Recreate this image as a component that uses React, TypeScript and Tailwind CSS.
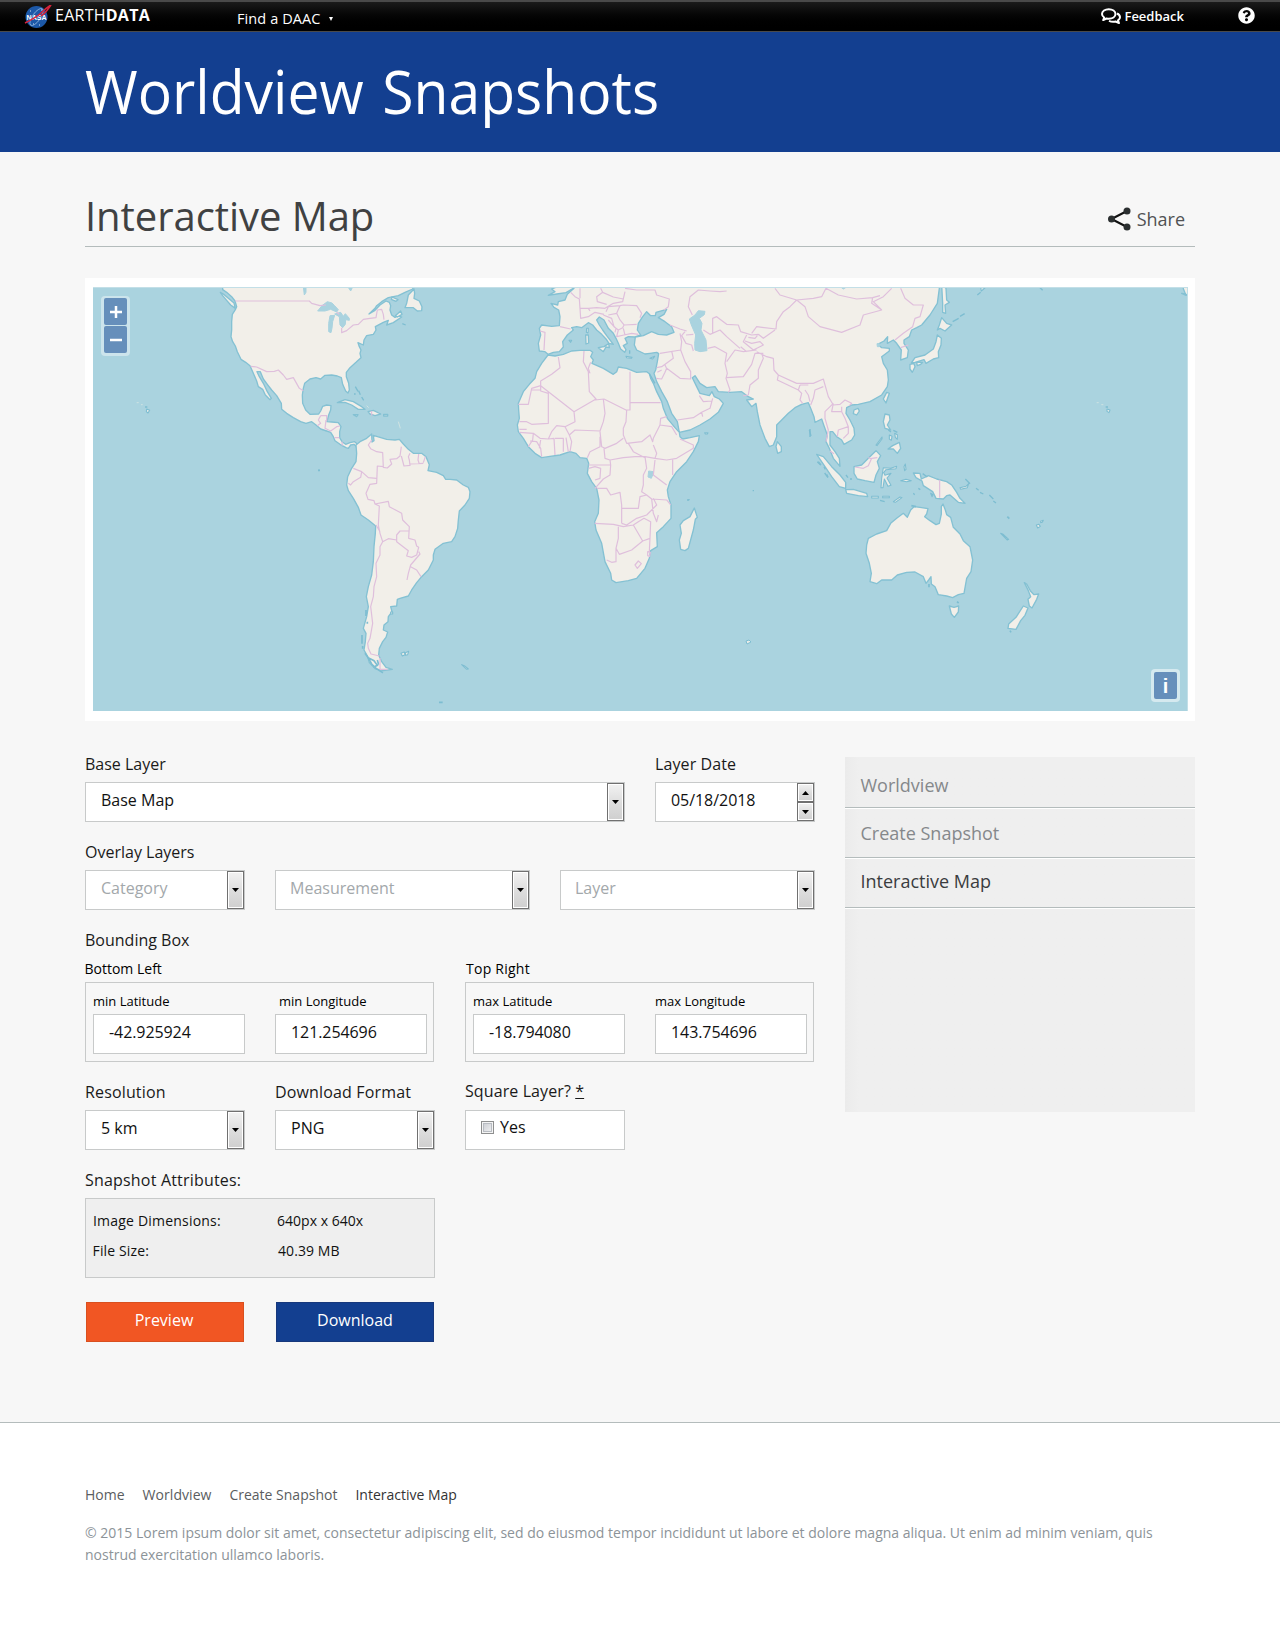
import React from "react";
import { FaQuestionCircle } from "react-icons/fa";

function Land({ d }: { d: string }) {
  return <path d={d} fill="#f2efe9" stroke="#84c1d3" strokeWidth="4" strokeLinejoin="round" />;
}

function Islet({ d }: { d: string }) {
  return <path d={d} fill="#e9ece8" stroke="#7dbdd1" strokeWidth="3.2" strokeLinejoin="round" />;
}

function Sea({ d }: { d: string }) {
  return <path d={d} fill="#aad3df" stroke="#aad3df" strokeWidth="3" strokeLinejoin="round" />;
}

function Border({ d }: { d: string }) {
  return <path d={d} fill="none" stroke="#dfbfdc" strokeWidth="3.6" strokeLinejoin="round" />;
}

function WorldMap() {
  return (
    <svg className="block h-[424px] w-[1095px] bg-[#aad3df]" viewBox="93 287 1095 424">
      {/* North America and the Caribbean */}
      <g transform="translate(80 275) scale(.33333)">
        <Land d="M428 20V44L440 52 455 65 465 78 470 95 466 104 457 118 455 140 455 165 453 185 458 200 466 213 472 230 483 253 497 262 510 272 518 290 530 318 535 335 548 343 556 360 570 374 574 370 562 350 550 325 538 305 531 290 541 290 550 312 562 328 575 345 590 362 604 385 605 403 620 415 640 428 662 440 678 445 695 440 708 450 722 462 740 468 752 472 760 485 765 497 780 508 798 518 805 520 812 510 822 508 828 514 832 522 835 510 824 500 810 503 797 508 786 500 779 488 779 470 783 455 775 443 755 441 741 440 746 420 752 405 753 392 740 390 728 394 722 408 716 417 690 418 677 405 668 385 667 360 670 340 674 325 690 312 708 308 722 312 735 301 755 300 772 303 784 308 788 328 797 348 804 354 808 345 806 325 799 305 799 292 810 278 828 262 843 248 840 235 843 225 838 215 834 203 850 210 852 195 860 182 880 178 888 165 886 155 910 142 925 136 920 150 940 143 965 126 955 122 945 127 935 120 930 105 932 92 928 82 918 78 900 90 885 106 867 117 885 100 890 92 905 80 925 68 955 62 975 52 998 42 1005 20Z" />
        <Land d="M421 52L430 57 445 70 462 84 466 100 452 90 440 76 428 62Z" />
        <Land d="M985 60L1002 42 1004 55 1002 70 1018 78 1026 95 1025 107 1012 108 1000 98 975 98 980 85Z" />
        <Land d="M936 66l18 8-6 5-14-6zM946 122l16-14 4 10-14 8z" />
        <Land d="M772 383L795 374 820 380 845 395 855 403 835 403 815 390 795 382Z" />
        <Land d="M864 410L880 406 902 417 885 422 870 417ZM820 419h14l-4 6zM911 418h12v5h-12z" />
        <path d="M826 335l8 14M836 347l5 12M845 366l6 10M822 357h5M195 396h7M967 146l10 4M714 586h6" stroke="#7dbdd1" strokeWidth="4" />
        <path d="M170 383h6M183 389h5M860 392l6 6M955 440l6 20" stroke="#cfe3e2" strokeWidth="3" />
        <Islet d="M200 402l9 4-5 8-5-4z" />
        <Sea d="M713 108L726 92 742 80 756 84 764 92 775 104 770 111 752 103 735 108ZM750 122L764 121 758 140 756 160 753 173 746 170 746 145ZM764 117L782 112 790 124 796 116 808 130 808 136 797 134 796 148 788 158 780 150 778 125ZM670 36L678 36 678 52 673 60ZM804 36h14l-6 12z" />
        <Border d="M466 78H688L695 85 720 92 738 90M770 112L778 118M785 158L785 173 800 167 820 150 835 148 850 133 870 130 888 128 892 105 905 103 910 118 912 134M512 274L530 276 560 290 583 289 595 285 610 300 620 313 640 308 658 340 670 347M722 422H740V438M722 422L715 435 722 445 712 452M738 435L735 460 752 468 770 455 780 453M763 488H778M786 500L787 512M874 408l2 14" />
      </g>

      {/* South America, Madagascar */}
      <g transform="translate(300 430) scale(.33333)">
        <Land d="M168 45L180 35 200 25 215 12 216 36 222 32 220 16 240 22 260 28 285 30 298 28 310 42 325 58 340 70 365 70 378 80 383 92 388 104 384 122 410 127 430 137 437 148 450 148 470 150 490 165 505 172 510 185 508 205 495 225 478 243 475 270 473 295 465 320 455 335 430 340 405 358 400 375 400 390 385 420 365 440 350 458 335 480 325 498 300 505 292 508 290 528 272 530 276 545 265 560 264 575 252 585 250 600 263 606 258 622 248 635 238 655 236 675 245 695 258 712 277 718 250 722 225 716 208 698 203 680 192 660 196 635 198 610 190 595 200 560 205 530 199 500 205 470 215 435 220 395 222 350 226 310 227 288 205 270 183 255 175 232 160 205 145 182 140 165 143 140 155 115 168 95 170 70Z" />
        <Land d="M1183 234L1192 262 1186 268 1180 300 1165 355 1155 362 1142 358 1138 330 1144 310 1140 285 1150 272 1170 260Z" />
        <Islet d="M303 670l10-4 2 8-8 4zM316 668l10-4-3 10-6 2zM485 704l8 3 12 10-5 1zM272 546h6v6h-6z" />
        <path d="M198 540v18M202 575v6M186 615v26M188 648v8M195 670l10 14 10 18 14 14 20 12M206 684l16 8 10 14-12 6M232 690l4 14M417 817h11M54 121h6M1161 210h6" fill="none" stroke="#7dbdd1" strokeWidth="5" />
        <Border d="M215 30L205 45 212 56 230 65 248 68 250 112 262 114 275 102 270 88 290 86 300 78 304 50M304 78L312 108 330 106 328 90 325 80 330 70M330 102L370 100M356 72L354 90 358 102M370 98L376 80M160 115L185 125 205 143 230 145M185 125L182 142 160 155 152 165 145 160M250 110L232 108 230 160 210 163 198 190 204 208 222 212 225 222 265 214 268 230 305 250 308 270 328 290 326 325 345 330 350 348 356 352 350 375 335 382 320 378 325 362 290 335 290 315 300 303 326 303M225 222L238 228 235 285 240 310 248 335 265 326 290 330M356 365L360 372 332 405 325 430 321 450M332 410L350 420 363 440M228 285L240 305M248 335L240 350 240 375 228 400 230 440 222 470 220 500 212 530 218 580 210 625 203 640 205 655 213 672 238 678M240 684V718H262" />
      </g>

      {/* Europe, Asia and Africa */}
      <g transform="translate(480 275) scale(.33333)">
        <Land d="M282 20V40L262 58 255 75 235 80 233 90 213 85 222 97 236 105 240 125 238 152 215 154 185 150 178 160 182 180 175 205 178 228 195 230 204 238 220 232 238 230 250 216 248 200 262 180 280 165 275 158 290 155 305 158 325 143 338 150 350 165 365 178 378 192 387 205 372 215 355 218 370 230 378 216 388 218 386 205 400 208 380 182 368 165 358 150 350 135 358 126 372 135 385 160 400 175 408 190 415 205 422 222 434 232 438 224 430 212 442 205 435 190 445 185 465 186 482 180 472 165 475 145 488 125 500 110 512 122 526 122 528 112 560 103 552 118 535 128 555 140 575 155 582 172 560 180 535 178 515 170 490 182 466 186 463 210 470 225 495 237 510 235 530 232 536 236 532 260 527 285 522 295 530 320 545 350 562 380 575 415 592 440 598 472 630 465 660 450 690 432 715 412 730 385 718 372 703 365 696 350 688 362 660 355 650 335 637 308 645 302 660 325 680 338 705 335 715 350 750 352 785 350 805 365 820 372 800 375 815 395 828 385 832 410 840 450 855 490 868 515 880 510 890 485 890 450 905 435 925 415 945 398 965 388 985 383 992 400 1002 425 1005 442 1025 432 1033 455 1042 480 1038 500 1048 520 1060 550 1080 574 1078 550 1065 530 1050 510 1050 470 1058 470 1070 485 1085 495 1092 508 1115 495 1124 480 1122 460 1110 435 1098 415 1100 398 1115 390 1135 388 1170 380 1205 360 1222 335 1225 315 1222 285 1210 265 1205 245 1228 228 1228 220 1205 218 1193 208 1212 198 1223 185 1222 205 1240 195 1250 205 1264 225 1262 255 1282 248 1285 225 1272 205 1272 195 1288 185 1295 165 1310 158 1325 150 1350 120 1372 85 1378 40V20Z" />
        <Land d="M204 240L225 243 250 238 275 228 300 226 330 226 338 232 332 245 340 255 336 265 370 280 400 298 410 290 415 276 440 280 470 292 500 290 508 296 512 310 520 325 530 350 545 380 550 400 562 430 585 458 598 472 600 485 608 492 630 488 658 482 655 500 640 530 620 560 590 590 570 620 562 645 565 665 573 690 573 730 550 755 530 773 532 815 512 827 508 850 495 880 470 910 445 917 408 923 395 915 392 895 375 860 365 805 348 765 344 740 355 715 357 675 350 640 335 620 322 595 326 565 320 550 300 548 288 535 270 530 240 540 205 545 185 548 165 535 145 515 130 490 115 470 112 450 118 430 116 405 115 385 130 350 148 328 165 310 170 290 185 265Z" />
        <Land d="M205 61L225 50 215 42 225 38V20H285L280 40 258 53 230 57Z" />
        <Land d="M892 500L904 515 904 530 893 535 888 515ZM317 180h8l1 24-8 3z" />
        <Islet d="M320 160h5l-1 14-5-2zM438 244l18 3-2 3-14-2zM510 250l14-6-6 8zM267 196l8 0-3 6zM674 473h10l-2 4h-6z" />
        <Sea d="M655 107L675 109 673 119 658 130 666 145 663 165 678 195 681 227 660 230 645 225 644 205 647 180 634 150 628 132 645 120ZM506 588L520 590 518 600 514 610 504 606ZM1082 36h18l-10 6zM1191 206h7v9h-6z" />
        <path d="M508 296L525 325M990 462v24M818 647h4M625 674h4M449 226v10M1012 560l10 10M1034 594l10 14" fill="none" stroke="#7dbdd1" strokeWidth="4" />
        {/* European borders */}
        <Border d="M272 52L285 65 298 72 300 100 325 100 350 98 375 100 400 85 428 80 435 50M240 155L272 162M180 168L195 172 192 225M300 40L300 70M300 100L302 130 325 125 345 112 372 118M362 40L368 52 350 65 352 80 380 88M368 52L400 66 430 72M325 100L330 108M435 40L470 45 525 45 530 60 568 72 565 95 552 105M378 110L385 95 420 92 430 90 470 92 485 115 480 128M420 92L410 115 385 120M410 115L420 135 432 150 470 148M370 120L395 130 402 155 385 135M402 155L415 165 428 158 432 150M415 165L410 185 432 180 455 175 475 178M430 160L435 180M398 150L408 160 405 172" />
        {/* African borders */}
        <Border d="M235 246L240 278 215 298 182 318 182 332 155 340 145 388 115 388M182 332L282 410 348 372 328 350 325 290 310 260 312 228M330 295L325 280 332 262M450 290V405L438 405 372 372 345 375M450 383H542M205 352V445L155 448 140 440 118 440M182 332V348L205 355M155 345H180M282 410L285 440 255 455 230 452 215 470 205 492 180 490 160 475 118 472M118 463H140M255 455L268 480 285 465 360 468 370 440 375 415 370 372M440 405L438 440 430 460 430 480 440 505 485 500 510 480 518 500 520 490 540 450 542 430 560 425M430 490L410 505 375 520 365 515 360 470M360 485L360 515 330 530 322 548M372 520L375 550 390 555 430 548 465 545 495 545 525 550 530 535 520 510M445 505L460 530 495 548M525 550L560 555 590 550 640 520 640 510 600 492M540 450L575 455 590 480M578 552L578 600M560 630L520 600 525 555M225 540L222 490 205 492M225 490H250V530M258 488L265 530M268 480L275 500 270 530M185 545L182 520 170 500 150 498M145 515L158 495 160 475M182 495L178 520M326 570H392L390 600 370 612 345 640M392 570L390 555M326 580L345 575 362 580 360 610 345 615M350 640H380L392 660 420 652 425 690 425 745M344 745L400 748 430 755 460 750M425 700H475L480 665 500 660 515 672 560 675 572 690M425 745L440 750 470 730 500 720 530 690 520 670M460 750L488 798 455 825 418 838 408 820 415 790 415 755M460 750L475 740 492 730 512 740 510 790 488 798M408 820L408 860 395 862 380 855M510 790L508 830M495 545L500 580 490 600 490 630 485 650 500 660M515 672L520 715 530 740 535 720M465 870L475 858 484 866 472 880ZM503 830l8 2-2 12-6-2z" />
        {/* Asian borders */}
        <Border d="M570 150L600 162 620 168M600 175L605 200 602 225 540 235M615 170L605 182 618 205 635 210 640 228M618 180L640 178M575 228L580 250 545 275 530 278M602 225L615 260 632 290 632 312 600 310 560 280 555 292 545 312 528 310M532 292L545 285M555 270L562 285M592 435L640 428 665 412 690 400 698 370M665 412L668 425M658 362L670 380 695 378M637 120L625 95 630 65 655 45 690 48 720 50 740 48M683 220L705 215 740 235 735 265 742 295 738 310 750 345 745 352M740 260L765 225 790 230 830 225M738 308L790 305 815 268 825 235 850 235M670 165L690 178 720 165 740 185 780 220M698 175V130L710 125 740 148 775 150 782 170 815 180 835 178M782 215L800 230M800 180L790 200 820 225 850 210 840 200 815 205 795 198M815 175L830 155 888 162 890 140 910 110 930 95 950 75 900 60 885 40M835 178L850 190 885 165M805 187L825 190 832 182M950 75L1000 70 1025 65 1038 40 1075 60 1130 72 1178 68 1200 62M950 75L975 95 985 125 1020 155 1085 172 1140 150 1150 120 1205 105 1175 85 1178 68M1205 105L1180 80 1210 65 1235 40M1262 40L1275 70 1300 90 1330 90 1320 125 1305 130 1298 155 1270 175 1245 195M1262 218L1285 210M830 230L860 245 880 250 882 285 895 300 950 325 1000 325 1030 312 1038 340 1045 365 1060 390M845 235L850 250 835 285 835 310 810 330 805 360 790 362M895 300L892 315 955 345 960 330M960 330L985 330M955 345L965 355 960 375 968 385M975 345L985 360 990 380M1030 335L1005 345 1000 370 992 390M1060 385L1035 410 1035 430 1045 465 1038 500M1060 385L1055 410 1085 410 1095 430 1105 455 1075 465 1072 485M1060 390L1080 388 1095 375 1115 385 1108 392M1085 410L1085 395M1090 490L1105 475 1105 455M1050 528l12 8" />
      </g>

      {/* East and South-East Asia */}
      <g transform="translate(800 275) scale(.33333)">
        <Land d="M425 30L438 40 440 75 448 82 435 90 437 115 428 112 428 85ZM425 128L440 145 455 150 435 168 420 160 412 165 418 150ZM412 180L424 190 423 210 415 230 416 248 400 252 378 265 372 254 345 262 334 264 345 248 375 240 400 222 408 200ZM330 268L342 266 345 275 337 292 330 282ZM350 262l18 0-6 6-10 4zM162 405l12-5 4 8-8 12-10-4zM260 352L268 355 258 384 250 372Z" />
        <Land d="M255 417L268 420 270 435 262 450 272 465 255 460 250 440ZM264 522L278 512 298 502 302 520 292 535 280 522Z" />
        <Land d="M162 575L185 570 205 550 228 527 242 542 232 560 238 580 228 600 222 622 195 617 172 612 162 595ZM50 538L70 545 95 575 120 600 137 622 137 640 118 635 95 605 75 575ZM137 644L160 643 200 655 203 665 175 662 140 655Z" />
        <Islet d="M268 480l8 4-2 12-6-4zM284 475l8 4 0 14-6-6zM228 510l18-24 0 6-15 20zM215 664h20v5h-20zM248 664h20v4h-20zM280 680l20-14 6 2-20 14zM250 578l22 2 18-6-2 7-30 3-7 9 4 8 18-6-12 14 12 22-9 3-11-22-4 26-6 0 2-28zM312 575l4-8 2 16-4 4zM302 617l16-4 16 4-14 3z" />
        <Land d="M340 594L360 595 364 612 385 602 410 612 440 620 455 630 470 652 480 670 495 685 475 682 450 660 440 662 430 672 408 670 398 650 370 632 366 618 348 608ZM1145 55l12 2 15 14v-40h-22v10l8 20z" />
        <Islet d="M480 638l18-4 8-8-4 12-20 5zM392 655l7 4-3 6z" />
        <path d="M55 560l8 10M72 575l4 8M80 598l4 8M138 600l6 8M150 612h6M368 596l14 10M496 612l14 14M528 640l8 6M540 652l10 5M568 660l12 12M580 678l8 6M355 640l6 4M340 655l4 4M458 140l18-10M480 124l14-8M720 38l8 8M265 465l8 6M280 466l12 6M240 676l14 4M532 60l10-8M28 465l5 18M917 396h7" stroke="#7dbdd1" strokeWidth="4" fill="none" />
        <path d="M890 383h6M904 389h6" stroke="#cfe3e2" strokeWidth="3" />
        <Islet d="M921 402l9 3-3 8-6-4zM542 38l14 0-12 10z" />
        <Border d="M165 576L190 580 205 572 215 550 232 548M205 548L215 552M419 614V668" />
      </g>

      {/* Australia and New Zealand */}
      <g transform="translate(780 430) scale(.33333)">
        <Land d="M392 240L402 230 420 232 444 236 440 252 434 260 450 272 468 284 478 280 484 252 484 230 489 222 496 240 500 254 512 262 520 292 540 312 550 332 570 350 578 390 573 425 560 445 552 490 535 494 518 503 500 498 475 494 465 470 454 462 453 440 446 450 438 460 430 440 405 426 380 427 352 435 335 450 305 450 290 461 270 455 274 430 268 400 258 370 260 345 265 325 290 312 320 302 332 280 350 265 370 250 382 262Z" />
        <Land d="M508 528L522 532 536 528 535 546 523 562 514 552ZM733 458L740 462 752 484 762 494 776 492 770 508 756 534 748 528 744 508 752 500 745 482ZM730 528L744 534 735 556 722 572 708 598 684 595 686 582 708 562Z" />
        <Islet d="M662 310l6 2 18 16-4 2zM769 285l8-2 4 6-8 5zM782 274l8-3-3 6-5 1z" />
        <path d="M447 462v10M531 515l5 4M682 260l6 6M690 602l3 5M394 227l14 3" stroke="#7dbdd1" strokeWidth="5" />
      </g>
      {/* Southern Indian Ocean islands */}
      <path d="M746 641l3-1 2 2-4 2z" fill="#e9ece8" stroke="#7dbdd1" />
      <path d="M93 287.5H1188M1187.5 287V711" stroke="#c3dfe7" fill="none" />
    </svg>
  );
}

function MapButton({ children }: { children: React.ReactNode }) {
  return (
    <button className="flex h-[27px] w-[23px] items-center justify-center rounded-[2px] bg-[#668fbb] text-white">
      {children}
    </button>
  );
}

function Arrow({ up = false }: { up?: boolean }) {
  return (
    <svg className="h-1 w-[7px]" viewBox="0 0 7 4">
      <path d={up ? "M0 4L3.5 0 7 4Z" : "M0 0H7L3.5 4Z"} fill="#000" />
    </svg>
  );
}

const knob =
  "flex items-center justify-center border border-[#707070] bg-linear-to-b from-[#f2f2f2] via-[#dedede] to-[#cfcfcf] shadow-[inset_0_0_0_1px_#fff]";

function Select({ value, muted = false, width, inset = "pl-[15px]" }: { value: string; muted?: boolean; width: string; inset?: string }) {
  return (
    <div className={`flex h-10 justify-between border border-[#c8caca] bg-white ${width} ${inset}`}>
      <span className={`text-base leading-[34px] ${muted ? "text-[#a3a8ab]" : "text-[#111]"}`}>{value}</span>
      <span className={`w-[17px] ${knob}`}>
        <Arrow />
      </span>
    </div>
  );
}

function Label({ tracking = "", children }: { tracking?: string; children: React.ReactNode }) {
  return <div className={`mb-1.5 h-6 text-base leading-6 whitespace-nowrap text-[#1a1a1a] ${tracking}`}>{children}</div>;
}

function Coordinate({ label, value, shift = "" }: { label: string; value: string; shift?: string }) {
  return (
    <div className="w-[152px]">
      <div className={`mb-[3px] h-5 text-[13px] leading-5 text-black ${shift}`}>{label}</div>
      <div className="h-10 border border-[#c8caca] bg-white pl-[15px] text-base leading-[34px] tracking-[-0.08px] text-[#111]">{value}</div>
    </div>
  );
}

function Corner({ title, shift = "", children }: { title: string; shift?: string; children: React.ReactNode }) {
  return (
    <div className="w-[349px]">
      <div className={`mb-1 h-5 text-sm leading-[22px] text-black ${shift}`}>{title}</div>
      <div className="flex h-20 gap-[30px] border border-[#c8caca] pt-2 pl-[7px]">{children}</div>
    </div>
  );
}

function NasaLogo() {
  return (
    <svg className="h-6 w-7" viewBox="0 0 28 24">
      <circle cx="12.5" cy="12" r="11" fill="#1c58a8" />
      <path d="M6 6l1 0M17 5l1 0M9 19l1 0M15 20l1 0" stroke="#cfe0f4" />
      <ellipse cx="12.500" cy="12" rx="10" ry="4" transform="rotate(-55 12.5 12)" fill="none" stroke="#8fb3dc" strokeWidth=".8" />
      <text x="2.600" y="14.500" fontSize="7" fontWeight="700" fill="#fff" textLength="20" fontFamily="Liberation Sans">NASA</text>
      <path d="M1 18C9 14 14 11 17 8 21 4 25 1 27 0 24 4 22 8 17 11" fill="none" stroke="#d5243c" strokeWidth="1.500" />
    </svg>
  );
}

function CommentsIcon() {
  return (
    <svg className="h-[17px] w-5" viewBox="0 0 20 17" fill="none" stroke="#fff" strokeWidth="2" strokeLinejoin="round">
      <path d="M16 5.500C18 6.300 19 7.600 19 9.200 19 10.500 18.200 11.600 17 12.400L18 15 14.500 13.500C12.500 14 10 13.800 8 12.800" />
      <path d="M7.800 1.200C11.500 1.200 14.500 3.200 14.500 6S11.500 10.700 7.800 10.700C7 10.700 6.300 10.600 5.600 10.500L2.200 12 3.200 9.500C1.800 8.600 1 7.400 1 6 1 3.200 4 1.200 7.800 1.200Z" />
    </svg>
  );
}

export default function App() {
  return (
    <div className="min-h-[1629px] w-[1280px] bg-white font-['Open_Sans',sans-serif]">
      <div className="flex h-8 justify-between border-t-2 border-b border-[#4a4a4a] bg-linear-to-b from-[#1b1b1b] to-black text-white">
        <div className="flex">
          <div className="mt-[3px] ml-6"><NasaLogo /></div>
          <div className="w-[95px] pt-px pl-[3px] text-base leading-6 tracking-[0.25px]">EARTH<b>DATA</b></div>
          <div className="ml-[90px] flex items-center pt-1 text-[14.500px] font-medium tracking-[0.1px]">Find a DAAC
            <svg className="ml-2 h-1 w-1" viewBox="0 0 4 4"><path d="M0 0H4L2 4Z" fill="#fff" /></svg>
          </div>
        </div>
        <div className="flex items-center pr-[25px]">
          <CommentsIcon />
          <span className="ml-[3px] text-[13px] font-semibold">Feedback</span>
          <FaQuestionCircle className="-mt-0.5 ml-[54px] h-[17px] w-[17px]" />
        </div>
      </div>

      <header className="h-[120px] bg-[#133f90] pt-[19px] pl-[85px]">
        <h1 className="w-[620px] origin-left scale-x-[.935] text-[61px] leading-[80px] [word-spacing:4px] whitespace-nowrap text-white">Worldview Snapshots</h1>
      </header>

      <div className="h-[1271px] border-b border-[#b4bcbc] bg-[#f7f7f7] px-[85px]">
        <div className="flex h-[95px] items-end justify-between border-b border-[#b4bcbc] pr-2">
          <h2 className="pb-[3px] text-[40px] leading-[54px] tracking-[-0.05px] text-[#404142]">Interactive Map</h2>
          <div className="flex items-center pb-[15px]">
            <svg className="mr-[7px] h-6 w-6" viewBox="0 0 24 24" fill="#2b2f30">
              <path d="M3.500 12L19 4M3.500 12L19 20" stroke="#111" strokeWidth="2" />
              <circle cx="3.500" cy="12" r="3.500" /><circle cx="19" cy="4" r="3.500" /><circle cx="19" cy="20" r="3.500" />
            </svg>
            <span className="mr-0.5 -ml-0.5 text-lg leading-6 text-[#505253]">Share</span>
          </div>
        </div>

        <div className="relative mt-[31px] h-[443px] bg-white pt-[9px] pl-2">
          <WorldMap />
          <div className="absolute top-[18px] left-4 flex flex-col gap-px rounded bg-white/40 px-[3px] pt-0.5 pb-[3px]">
            <MapButton><svg className="size-3" viewBox="0 0 12 12"><path d="M0 6H12M6 0V12" stroke="#fff" strokeWidth="2.500" /></svg></MapButton>
            <MapButton><svg className="size-3" viewBox="0 0 12 12"><path d="M0 6H12" stroke="#fff" strokeWidth="2.500" /></svg></MapButton>
          </div>
          <div className="absolute right-[15px] bottom-[19px] rounded bg-white/50 p-[3px]">
            <MapButton><span className="font-['Liberation_Sans'] text-xl leading-none font-bold">i</span></MapButton>
          </div>
        </div>

        <div className="mt-[31px] flex justify-between">
          <form className="flex w-[730px] flex-col gap-[18px]">
            <div className="flex gap-[30px]">
              <div><Label>Base Layer</Label><Select value="Base Map" width="w-[540px]" /></div>
              <div>
                <Label tracking="tracking-[0.1px]">Layer Date</Label>
                <div className="flex h-10 w-[160px] justify-between border border-[#c8caca] bg-white pl-[15px]">
                  <span className="text-base leading-[34px] tracking-[-0.05px] text-[#111]">05/18/2018</span>
                  <span className="flex w-[17px] flex-col">
                    <span className={`flex-1 ${knob}`}><Arrow up /></span>
                    <span className={`flex-1 ${knob}`}><Arrow /></span>
                  </span>
                </div>
              </div>
            </div>

            <div>
              <Label>Overlay Layers</Label>
              <div className="flex gap-[30px]">
                <Select value="Category" muted width="w-[160px]" />
                <Select value="Measurement" muted width="w-[255px]" inset="pl-[14px]" />
                <Select value="Layer" muted width="w-[255px]" inset="pl-[14px]" />
              </div>
            </div>

            <div>
              <Label>Bounding Box</Label>
              <div className="flex gap-[31px]">
                <Corner title="Bottom Left" shift="-ml-[0.500px]">
                  <Coordinate label="min Latitude" value="-42.925924" />
                  <Coordinate label="min Longitude" value="121.254696" shift="pl-1" />
                </Corner>
                <Corner title="Top Right" shift="pl-px tracking-[0.25px]">
                  <Coordinate label="max Latitude" value="-18.794080" />
                  <Coordinate label="max Longitude" value="143.754696" />
                </Corner>
              </div>
            </div>

            <div className="flex gap-[30px]">
              <div><Label tracking="tracking-[0.15px]">Resolution</Label><Select value="5 km" width="w-[160px]" /></div>
              <div className="w-[160px]"><Label tracking="tracking-[0.15px]">Download Format</Label><Select value="PNG" width="w-[160px]" /></div>
              <div>
                <div className="mb-[7px] h-[23px] text-base leading-[22px] tracking-[0.1px] text-[#1a1a1a]">Square Layer? <u className="underline-offset-1">*</u></div>
                <div className="flex h-10 w-[160px] border border-[#c8caca] bg-white pt-[10px] pl-[15px]">
                  <span className="size-[13px] border border-[#8e8f8f] bg-linear-to-br from-[#c6c9cf] to-[#f6f6f6] shadow-[inset_0_0_0_1px_#f4f4f4,inset_0_0_0_2px_#b8bcc2]" />
                  <span className="-mt-[6px] ml-[6px] text-base leading-6 text-[#111]">Yes</span>
                </div>
              </div>
            </div>

            <div>
              <Label tracking="tracking-[0.19px]">Snapshot Attributes:</Label>
              <dl className="grid h-20 w-[350px] grid-cols-[184px_1fr] content-start gap-y-[10px] border border-[#c8caca] bg-[#efefef] pt-[12px] pl-[7px] text-sm leading-5 text-[#111]">
                <dt className="tracking-[0.2px]">Image Dimensions:</dt><dd className="tracking-[0.03px]">640px x 640x</dd>
                <dt className="-ml-[0.500px] tracking-[0.15px]">File Size:</dt><dd className="pl-px tracking-[0.08px]">40.39 MB</dd>
              </dl>
              <div className="mt-6 flex gap-8 pl-px text-base leading-[34px] text-white">
                <button type="button" className="h-10 w-[158px] border border-[#d9501f] bg-[#f15623] pr-0.5 pb-1 leading-[34px]">Preview</button>
                <button type="button" className="h-10 w-[158px] border border-[#17387c] bg-[#133f90] pb-1 leading-[34px]">Download</button>
              </div>
            </div>
          </form>

          <nav className="mt-[5px] h-[355px] w-[350px] bg-[#efefef] bg-linear-to-r from-[#ebebeb] to-[#efefef] to-4% text-lg leading-6 text-[#85888b]">
            <div className="h-[51px] border-b border-[#b4bcbc] pt-4 pl-[15.500px]">Worldview</div>
            <div className="h-[50px] border-t border-b border-t-white border-b-[#b4bcbc] pt-3 pl-[15.500px]">Create Snapshot</div>
            <div className="h-[50px] border-t border-b border-t-white border-b-[#b4bcbc] pt-[10px] pl-[15.500px] text-[#3a3c3e]">Interactive Map</div>
            <div className="h-px bg-white" />
          </nav>
        </div>
      </div>

      <footer className="px-[85px] pt-[62px] text-sm">
        <nav className="flex gap-[18px] leading-5 text-[#5a5d60]">
          <span>Home</span>
          <span className="tracking-[0.05px]">Worldview</span>
          <span>Create Snapshot</span>
          <span className="text-[#333]">Interactive Map</span>
        </nav>
        <p className="mt-[17px] text-sm leading-[21.500px] text-[#8c9398]">
          © 2015 Lorem ipsum dolor sit amet, consectetur adipiscing elit, sed do eiusmod tempor incididunt ut labore et dolore magna aliqua. Ut enim ad minim veniam, quis
          nostrud exercitation ullamco laboris.
        </p>
      </footer>
    </div>
  );
}
